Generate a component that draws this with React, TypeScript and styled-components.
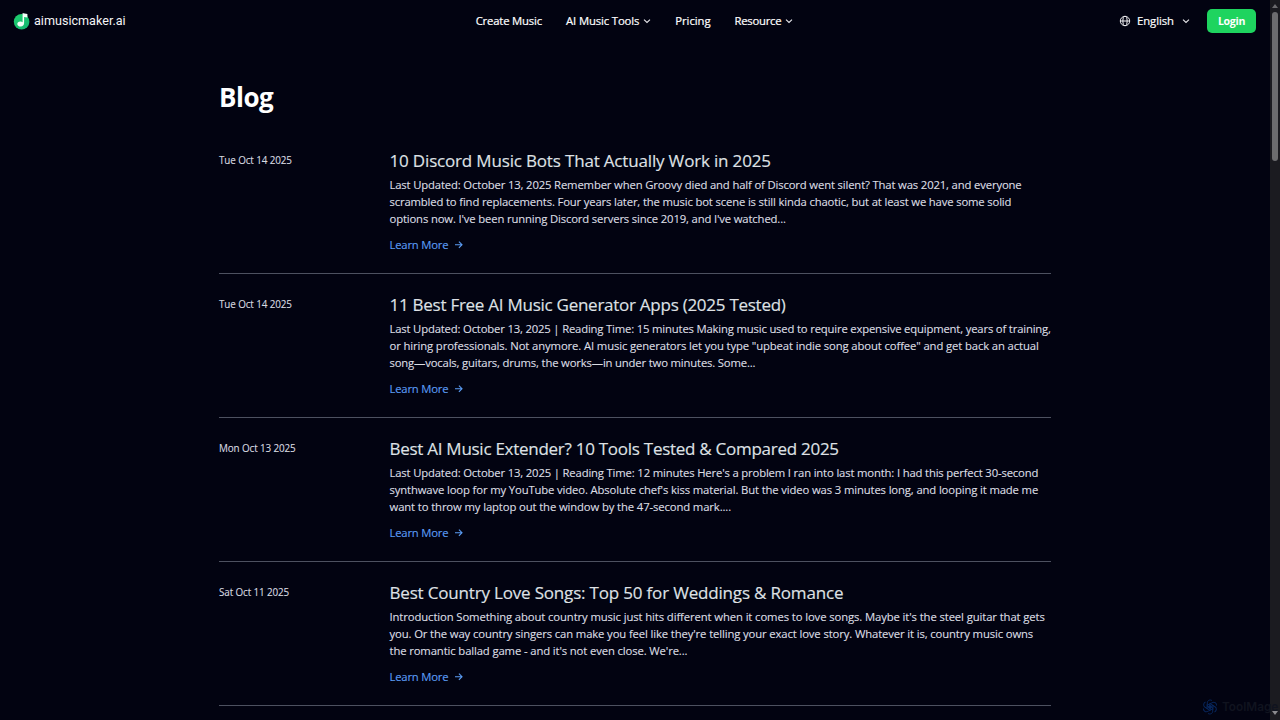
import React from "react";
import styled, { createGlobalStyle } from "styled-components";

const Global = createGlobalStyle`
  * { box-sizing: border-box; }
  html, body { margin: 0; height: 720px; overflow: hidden; background: #020311; }
  body { font-family: "Open Sans", "Noto Sans", sans-serif; color: #fff; }
  h1, h2, p { margin: 0; font-weight: 400; }
`;

const Screen = styled.div`
  display: flex;
  width: 1280px;
  height: 720px;
  overflow: hidden;
  background: #020311;
  position: relative;
`;
const Page = styled.div`
  width: 1270px;
  height: 720px;
  overflow: hidden;
`;
const Header = styled.header`
  height: 42px;
  display: grid;
  grid-template-columns: 1fr auto 1fr;
  align-items: center;
  padding: 0 14px 0 13px;
`;
const Brand = styled.a`
  display: flex;
  align-items: center;
  gap: 4px;
  font: 400 12.6px/18px Roboto, sans-serif;
  color: #f4f4f6;
`;
const Nav = styled.nav`
  display: flex;
  gap: 24px;
`;
const NavItem = styled.a<{ $track?: number }>`
  display: flex;
  align-items: center;
  gap: 4px;
  font-size: 11.3px;
  line-height: 16px;
  font-weight: 500;
  white-space: nowrap;
  -webkit-text-stroke: 0.2px currentColor;
  span { letter-spacing: ${(p) => p.$track ?? 0}px; }
`;
const Actions = styled.div`
  display: flex;
  justify-content: flex-end;
  align-items: center;
`;
const Language = styled(NavItem)`
  gap: 6px;
  margin-right: 17px;
  span { margin-right: 2px; }
`;
const Login = styled.button`
  width: 49px;
  height: 24px;
  border: 0;
  padding: 0;
  border-radius: 5px;
  background: #1ed45f;
  color: #fff;
  font: 700 10.6px/24px "Open Sans", sans-serif;
  letter-spacing: -0.3px;
`;
const Main = styled.main`
  width: 832px;
  margin: 0 0 0 219px;
  padding-top: 37px;
`;
const Heading = styled.h1`
  font-size: 26px;
  line-height: 36px;
  font-weight: 700;
  letter-spacing: -0.5px;
  margin-bottom: 15px;
`;
const Post = styled.article`
  display: grid;
  grid-template-columns: 170.5px 1fr;
  height: 144px;
  padding-top: 21px;
  border-bottom: 1px solid #4d5160;
`;
const PostDate = styled.time`
  font-size: 9.9px;
  line-height: 18px;
  color: #d9dbe0;
  letter-spacing: -0.12px;
  -webkit-text-stroke: 0.1px currentColor;
`;
const Title = styled.h2<{ $track: number }>`
  font-size: 17px;
  line-height: 20px;
  color: #dfe1e5;
  letter-spacing: ${(p) => p.$track}px;
  white-space: nowrap;
  -webkit-text-stroke: 0.15px currentColor;
`;
const Excerpt = styled.p`
  margin-top: 4.5px;
  font-size: 11.3px;
  line-height: 17.33px;
  color: #dcdee3;
  -webkit-text-stroke: 0.12px currentColor;
`;
const Line = styled.span<{ $track: number }>`
  display: block;
  white-space: nowrap;
  width: max-content;
  letter-spacing: ${(p) => p.$track}px;
`;
const More = styled.a`
  display: flex;
  align-items: center;
  gap: 6px;
  margin-top: 9px;
  font-size: 11.3px;
  line-height: 17px;
  letter-spacing: -0.2px;
  color: #5b9df5;
  -webkit-text-stroke: 0.12px currentColor;
`;
const Scrollbar = styled.aside`
  width: 10px;
  height: 720px;
  background: #1b1b20;
  display: flex;
  flex-direction: column;
  align-items: center;
  padding: 4px 0 5px;
`;
const Arrow = styled.i<{ $down?: boolean }>`
  border: 3px solid transparent;
  border-top: ${(p) => (p.$down ? "4px solid #8b8b8e" : "0")};
  border-bottom: ${(p) => (p.$down ? "0" : "4px solid #6b6b6e")};
`;
const Thumb = styled.div`
  width: 6px;
  height: 149px;
  margin: 4px 0 auto;
  border-radius: 3px;
  background: #6c6c6e;
`;
const Watermark = styled.div`
  position: absolute;
  left: 1202px;
  top: 699px;
  display: flex;
  align-items: center;
  gap: 4px;
  color: #10131f;
  font: 600 11.8px/16px Inter, sans-serif;
  white-space: nowrap;
  svg { flex: none; }
`;

const Chevron = () => (
  <svg width="8" height="8" viewBox="0 0 8 8" fill="none" stroke="#e8e8ec" strokeWidth="1.1">
    <path d="M1 2.7 4 5.5 7 2.7" />
  </svg>
);
const Globe = () => (
  <svg width="12" height="12" viewBox="0 0 12 12" fill="none" stroke="#f0f0f3" strokeWidth="1">
    <circle cx="6" cy="6" r="4.7" />
    <ellipse cx="6" cy="6" rx="2.1" ry="4.7" />
    <path d="M1.3 6h9.4" />
  </svg>
);
const ArrowRight = () => (
  <svg width="9" height="9" viewBox="0 0 9 9" fill="none" stroke="#5b9df5" strokeWidth="1.1">
    <path d="M1 4.7h7M4.9 1.6 8 4.7 4.9 7.8" />
  </svg>
);
const Logo = () => (
  <svg width="17" height="18" viewBox="0 0 17 18">
    <defs>
      <linearGradient id="disc" x1="0" y1="0" x2="1" y2="1">
        <stop offset="0" stopColor="#1fd06c" />
        <stop offset="1" stopColor="#13b573" />
      </linearGradient>
    </defs>
    <circle cx="8.6" cy="9.8" r="7.8" fill="url(#disc)" />
    <path d="M9.6 1.1c1 .5 3 .8 4.8 1v3.5l-3.3-.5v6c0 2-1.3 3.5-3.4 3.5S4.3 13.4 4.3 12c0-1.7 1.7-2.8 3.3-2.5.8.1 1.4.3 2 .7z" fill="#f3fff8" />
  </svg>
);
const Knot = () => (
  <svg width="16" height="16" viewBox="0 0 16 16" fill="none" stroke="#08265c" strokeWidth="1">
    {[0, 60, 120, 180, 240, 300].map((a) => (
      <path key={a} transform={`rotate(${a} 8 8)`} d="M5.3 8V3.8C5.3 1.5 8 .2 10 1.6M5.3 6.3 9 4.1" />
    ))}
    <circle cx="8" cy="8" r="1.5" fill="#08265c" />
  </svg>
);

type PostData = { date: string; title: string; track: number; lines: [string, number][] };

const posts: PostData[] = [
  {
    date: "Tue Oct 14 2025",
    title: "10 Discord Music Bots That Actually Work in 2025",
    track: -0.17,
    lines: [
      ["Last Updated: October 13, 2025 Remember when Groovy died and half of Discord went silent? That was 2021, and everyone", -0.155],
      ["scrambled to find replacements. Four years later, the music bot scene is still kinda chaotic, but at least we have some solid", -0.16],
      ["options now. I've been running Discord servers since 2019, and I've watched...", -0.155],
    ],
  },
  {
    date: "Tue Oct 14 2025",
    title: "11 Best Free AI Music Generator Apps (2025 Tested)",
    track: -0.26,
    lines: [
      ["Last Updated: October 13, 2025 | Reading Time: 15 minutes Making music used to require expensive equipment, years of training,", -0.179],
      ["or hiring professionals. Not anymore. AI music generators let you type \"upbeat indie song about coffee\" and get back an actual", -0.122],
      ["song—vocals, guitars, drums, the works—in under two minutes. Some...", -0.17],
    ],
  },
  {
    date: "Mon Oct 13 2025",
    title: "Best AI Music Extender? 10 Tools Tested & Compared 2025",
    track: -0.27,
    lines: [
      ["Last Updated: October 13, 2025 | Reading Time: 12 minutes Here's a problem I ran into last month: I had this perfect 30-second", -0.167],
      ["synthwave loop for my YouTube video. Absolute chef's kiss material. But the video was 3 minutes long, and looping it made me", -0.138],
      ["want to throw my laptop out the window by the 47-second mark....", -0.125],
    ],
  },
  {
    date: "Sat Oct 11 2025",
    title: "Best Country Love Songs: Top 50 for Weddings & Romance",
    track: -0.18,
    lines: [
      ["Introduction Something about country music just hits different when it comes to love songs. Maybe it's the steel guitar that gets", -0.112],
      ["you. Or the way country singers can make you feel like they're telling your exact love story. Whatever it is, country music owns", -0.128],
      ["the romantic ballad game - and it's not even close. We're...", -0.13],
    ],
  },
];

export default function App() {
  return (
    <Screen>
      <Global />
      <Page>
        <Header>
          <Brand><Logo />aimusicmaker.ai</Brand>
          <Nav>
            <NavItem $track={-0.17}><span>Create Music</span></NavItem>
            <NavItem $track={-0.12}><span>AI Music Tools</span><Chevron /></NavItem>
            <NavItem $track={-0.05}><span>Pricing</span></NavItem>
            <NavItem $track={-0.25}><span>Resource</span><Chevron /></NavItem>
          </Nav>
          <Actions>
            <Language $track={-0.05}><Globe /><span>English</span><Chevron /></Language>
            <Login>Login</Login>
          </Actions>
        </Header>
        <Main>
          <Heading>Blog</Heading>
          {posts.map((post) => (
            <Post key={post.title}>
              <PostDate>{post.date}</PostDate>
              <div>
                <Title $track={post.track}>{post.title}</Title>
                <Excerpt>
                  {post.lines.map(([text, track]) => (
                    <Line key={text} $track={track}>{text}</Line>
                  ))}
                </Excerpt>
                <More>Learn More<ArrowRight /></More>
              </div>
            </Post>
          ))}
        </Main>
      </Page>
      <Scrollbar><Arrow /><Thumb /><Arrow $down /></Scrollbar>
      <Watermark><Knot />ToolMage</Watermark>
    </Screen>
  );
}
